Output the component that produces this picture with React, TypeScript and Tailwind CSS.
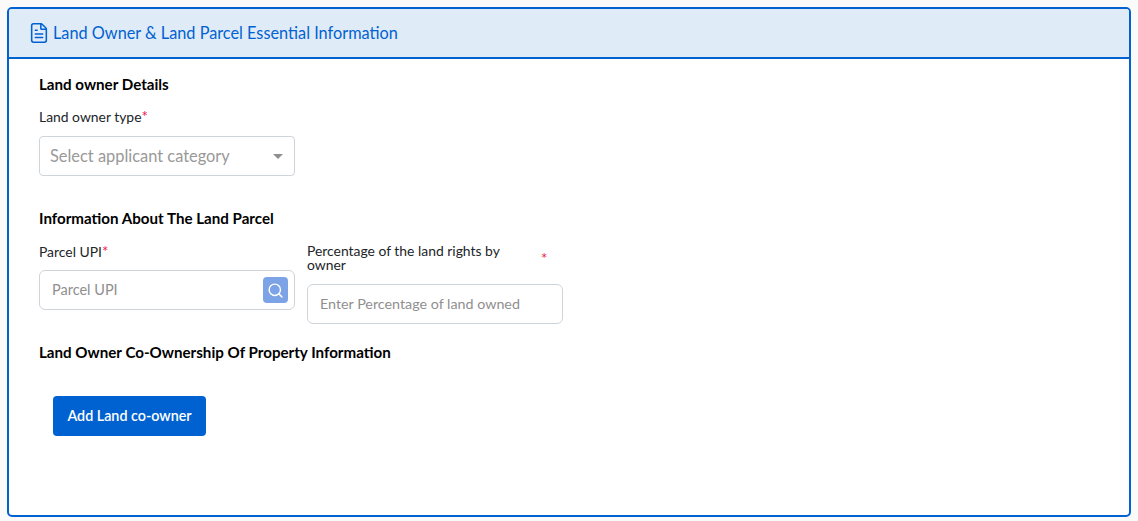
import { FileText, Search } from "lucide-react";

const font = "font-['Lato','Noto_Sans',sans-serif]";

function SectionTitle({ children }: { children: string }) {
  return <h3 className="text-[15.15px] leading-5 font-bold text-black">{children}</h3>;
}

export default function App() {
  return (
    <div className={`h-[521px] w-[1138px] overflow-hidden bg-[#fafafa] pt-[7px] pl-[7px] ${font}`}>
      <div className="h-[510px] w-[1124px] overflow-hidden rounded-[5px] border-2 border-[#0062d1] bg-white">
        {/* Header */}
        <div className="flex h-[50px] items-center gap-[3px] border-b-2 border-[#0062d1] bg-[#e0ebf8] pl-[19px] text-[#0062d1]">
          <FileText className="h-[22px] w-[22px]" strokeWidth={1.7} />
          <span className="text-[16.3px] leading-5">Land Owner &amp; Land Parcel Essential Information</span>
        </div>

        <div className="flex flex-col pl-[30px]">
          <div className="mt-[15px]">
            <SectionTitle>Land owner Details</SectionTitle>
          </div>
          <label className="mt-[13px] text-[13.9px] leading-5 text-[#212529]">
            Land owner type<span className="text-[15px] leading-none text-[#f0134d]">*</span>
          </label>
          {/* Select */}
          <div className="mt-[9px] flex h-10 w-[256px] items-center justify-between rounded-[4px] border border-[#ced4da] pr-[11px] pl-[10px]">
            <span className="text-[16.4px] text-[#999999]">Select applicant category</span>
            <span className="h-0 w-0 border-x-[5px] border-t-[5px] border-x-transparent border-t-[#8f8f8f]" />
          </div>

          <div className="mt-[32px]">
            <SectionTitle>Information About The Land Parcel</SectionTitle>
          </div>
          <div className="mt-[16px] flex items-start gap-3">
            <div className="w-[256px]">
              <label className="block text-[13.9px] leading-[14px] text-[#212529]">
                Parcel UPI<span className="text-[15px] leading-none text-[#f0134d]">*</span>
              </label>
              <div className="mt-[11px] flex h-10 items-center justify-between rounded-[6px] border border-[#ced4da] pr-[6px] pl-3">
                <span className="text-[14.5px] text-[#8f8f8f]">Parcel UPI</span>
                <span className="flex h-[26px] w-[25px] items-center justify-center rounded-[4px] bg-[#7ba3e6]">
                  <Search className="h-[17px] w-[17px] text-white" strokeWidth={2} />
                </span>
              </div>
            </div>
            <div className="w-[256px]">
              <div className="flex items-start">
                <label className="w-[200px] text-[13.9px] leading-[14px] text-[#212529]">
                  Percentage of the land rights by owner
                </label>
                <span className="mt-[7px] ml-[34px] text-[15px] leading-[14px] text-[#f0134d]">*</span>
              </div>
              <div className="mt-[12px] flex h-10 items-center rounded-[6px] border border-[#ced4da] pl-3">
                <span className="text-[14.3px] text-[#8f8f8f]">Enter Percentage of land owned</span>
              </div>
            </div>
          </div>

          <div className="mt-[18px]">
            <SectionTitle>Land Owner Co-Ownership Of Property Information</SectionTitle>
          </div>
          <button className="mt-[34px] ml-[14px] flex h-10 w-[153px] items-center justify-center rounded-[4px] bg-[#0062d1] text-[14.3px] font-semibold text-white">
            Add Land co-owner
          </button>
        </div>
      </div>
    </div>
  );
}
